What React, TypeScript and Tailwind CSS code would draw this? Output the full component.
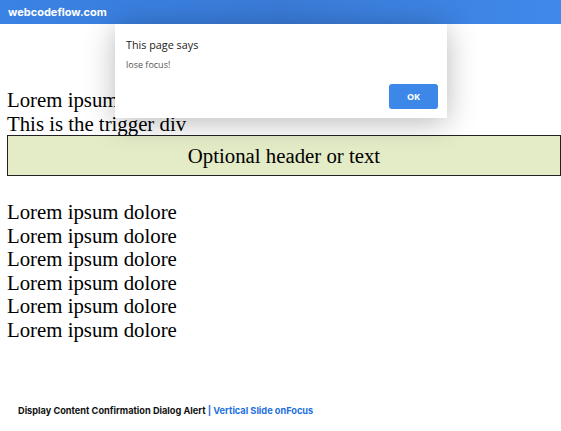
import React from 'react'

const lines = Array.from({ length: 6 }, () => 'Lorem ipsum dolore')

const App: React.FC = () => {
  return (
    <div className="relative w-[561px] h-[431px] bg-white overflow-hidden">
      {/* Top bar */}
      <div className="h-6 flex items-center px-2 bg-gradient-to-r from-[#3a82e4] via-[#3a7bd8] to-[#4089ea]">
        <span className="text-white text-[11px] font-bold font-['Inter',sans-serif]">webcodeflow.com</span>
      </div>

      {/* Page content */}
      <div className="pt-[64px] px-[7px] font-['Liberation_Serif',serif] text-[20.8px] leading-[23.5px] text-black">
        <div>Lorem ipsum</div>
        <div>This is the trigger div</div>
        <div className="w-[554px] h-[41px] flex items-center justify-center border border-[#222] bg-[#e3ebc7]">
          Optional header or text
        </div>
        <div className="mt-[24px]">
          {lines.map((t, i) => (
            <div key={i}>{t}</div>
          ))}
        </div>
      </div>

      {/* Footer */}
      <div className="absolute left-[18px] top-[404px] text-[9.2px] font-bold font-['Inter',sans-serif] text-[#111]">
        Display Content Confirmation Dialog Alert <span className="text-[#1b6fe0]">| Vertical Slide onFocus</span>
      </div>

      {/* Alert dialog */}
      <div className="absolute left-[115px] top-6 w-[332px] h-[94px] bg-white shadow-[0_4px_28px_rgba(0,0,0,0.28)] font-['Open_Sans',sans-serif]">
        <div className="pl-[11px] pt-[13px] text-[10.8px] text-[#222]">This page says</div>
        <div className="pl-[11px] pt-[5px] text-[9px] text-[#555]">lose focus!</div>
        <div className="absolute right-[9px] bottom-[9px] w-[49px] h-[25px] rounded-[3px] bg-[#3c87e8] flex items-center justify-center text-white text-[9px] font-bold">
          OK
        </div>
      </div>
    </div>
  )
}

export default App
